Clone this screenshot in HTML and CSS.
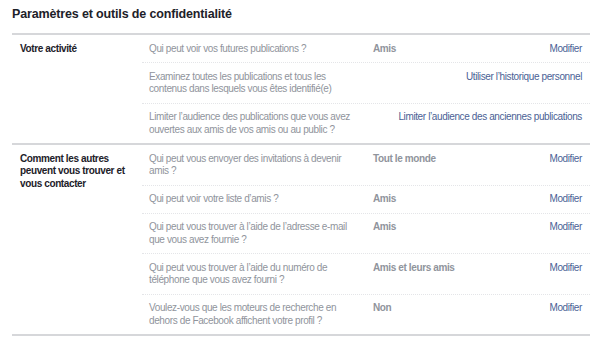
FILE: index.html
```html
<!DOCTYPE html>
<html lang="fr">
<head>
  <meta charset="UTF-8">
  <title>Paramètres et outils de confidentialité</title>
  <link rel="stylesheet" href="styles.css">
</head>
<body>
  <div class="privacy">
    <h1 class="privacy-title">Paramètres et outils de confidentialité</h1>

    <div class="privacy-section">
      <div class="section-label">Votre activité</div>
      <div class="section-rows">
        <div class="setting-row">
          <div class="setting-question">Qui peut voir vos futures publications ?</div>
          <div class="setting-value">Amis</div>
          <a class="setting-link" href="#">Modifier</a>
        </div>
        <div class="setting-row">
          <div class="setting-question">Examinez toutes les publications et tous les contenus dans lesquels vous êtes identifié(e)</div>
          <a class="setting-link wide" href="#">Utiliser l’historique personnel</a>
        </div>
        <div class="setting-row">
          <div class="setting-question">Limiter l’audience des publications que vous avez ouvertes aux amis de vos amis ou au public ?</div>
          <a class="setting-link wide" href="#">Limiter l’audience des anciennes publications</a>
        </div>
      </div>
    </div>

    <div class="privacy-section">
      <div class="section-label">Comment les autres peuvent vous trouver et vous contacter</div>
      <div class="section-rows">
        <div class="setting-row">
          <div class="setting-question">Qui peut vous envoyer des invitations à devenir amis ?</div>
          <div class="setting-value">Tout le monde</div>
          <a class="setting-link" href="#">Modifier</a>
        </div>
        <div class="setting-row">
          <div class="setting-question">Qui peut voir votre liste d’amis ?</div>
          <div class="setting-value">Amis</div>
          <a class="setting-link" href="#">Modifier</a>
        </div>
        <div class="setting-row">
          <div class="setting-question">Qui peut vous trouver à l’aide de l’adresse e-mail que vous avez fournie ?</div>
          <div class="setting-value">Amis</div>
          <a class="setting-link" href="#">Modifier</a>
        </div>
        <div class="setting-row">
          <div class="setting-question">Qui peut vous trouver à l’aide du numéro de téléphone que vous avez fourni ?</div>
          <div class="setting-value">Amis et leurs amis</div>
          <a class="setting-link" href="#">Modifier</a>
        </div>
        <div class="setting-row">
          <div class="setting-question">Voulez-vous que les moteurs de recherche en dehors de Facebook affichent votre profil ?</div>
          <div class="setting-value">Non</div>
          <a class="setting-link" href="#">Modifier</a>
        </div>
      </div>
    </div>
  </div>
</body>
</html>
```

FILE: styles.css
```css
/* Base */
* {
  margin: 0;
  padding: 0;
  box-sizing: border-box;
}

body {
  background: #fff;
  font-family: 'Liberation Sans', Arial, sans-serif;
  font-size: 10px;
  letter-spacing: -0.38px;
  color: #90949c;
}

/* Container */
.privacy {
  width: 578px;
  margin-left: 12px;
  padding-top: 6px;
}

.privacy-title {
  font-size: 12.5px;
  font-weight: bold;
  letter-spacing: -0.15px;
  color: #1d2129;
  line-height: 16px;
  padding-bottom: 11px;
  border-bottom: 2px solid #d6d7da;
}

/* Sections */
.privacy-section {
  display: flex;
  border-bottom: 2px solid #d6d7da;
}

.section-label {
  width: 130px;
  flex-shrink: 0;
  padding: 7.5px 8px 0 8px;
  font-weight: bold;
  color: #1d2129;
  line-height: 12.5px;
}

.section-rows {
  flex: 1;
}

/* Rows */
.setting-row {
  display: flex;
  align-items: flex-start;
  padding: 7.5px 8px 7px 7px;
  line-height: 12.5px;
  border-bottom: 1px dotted #e4e5e8;
}

.setting-row:last-child {
  border-bottom: none;
}

.setting-question {
  width: 206px;
  flex-shrink: 0;
  margin-right: 18px;
}

.setting-value {
  flex: 1;
  font-weight: bold;
}

.setting-link {
  color: #4b5f95;
  text-decoration: none;
}

.setting-link.wide {
  margin-left: auto;
}
```
